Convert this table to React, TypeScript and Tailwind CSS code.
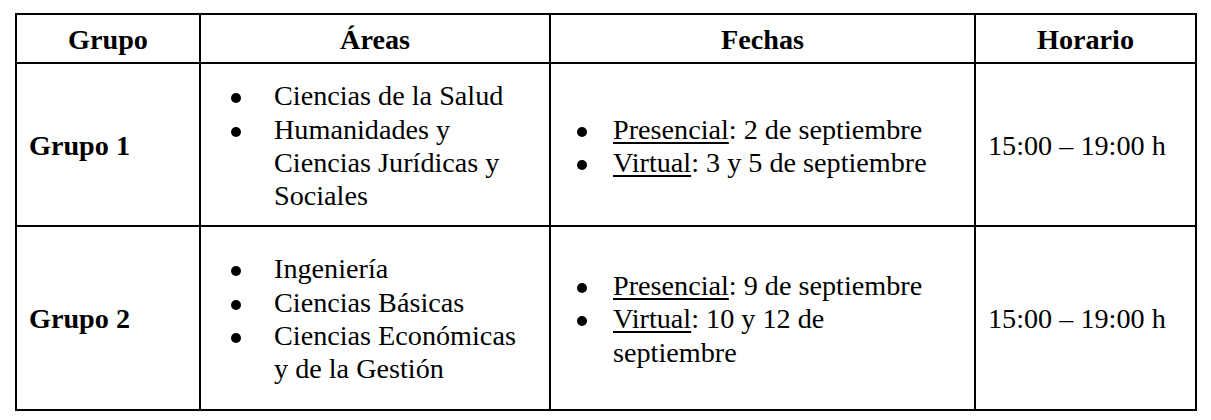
import React from "react";

const AreaItem = ({ children }: { children: React.ReactNode }) => (
  <div className="flex">
    <span className="flex w-[73px] shrink-0 pl-[30px] pt-[14px]">
      <span className="block h-[10px] w-[10px] rounded-full bg-black" />
    </span>
    <span className="w-[250px]">{children}</span>
  </div>
);

const DateItem = ({ label, rest }: { label: string; rest: string }) => (
  <div className="flex">
    <span className="flex w-[62px] shrink-0 pl-[26px] pt-[14px]">
      <span className="block h-[10px] w-[10px] rounded-full bg-black" />
    </span>
    <span className="w-[325px]">
      <span className="underline decoration-2 underline-offset-[3px]">{label}</span>
      {rest}
    </span>
  </div>
);

export default function App() {
  return (
    <div className="h-[420px] w-[1211px] bg-white pl-[15px] pt-[13px] font-['Liberation_Serif',serif] text-[28.2px] leading-[33.3px] text-black">
      <div className="grid w-[1182px] grid-cols-[182px_350px_425px_221px] grid-rows-[47px_163px_184px] border-2 border-black">
        {/* Header */}
        <div className="flex items-center justify-center pt-[3px] font-bold">Grupo</div>
        <div className="flex items-center justify-center border-l-2 border-black pt-[3px] font-bold">Áreas</div>
        <div className="flex items-center justify-center border-l-2 border-black pt-[3px] font-bold">Fechas</div>
        <div className="flex items-center justify-center border-l-2 border-black pt-[3px] font-bold">Horario</div>

        {/* Row 1 */}
        <div className="flex items-center border-t-2 border-black pl-[12px] pt-[3px] font-bold">Grupo 1</div>
        <div className="flex flex-col justify-center border-l-2 border-t-2 border-black pt-[3px]">
          <AreaItem>Ciencias de la Salud</AreaItem>
          <AreaItem>Humanidades y Ciencias Jurídicas y Sociales</AreaItem>
        </div>
        <div className="flex flex-col justify-center border-l-2 border-t-2 border-black pt-[3px]">
          <DateItem label="Presencial" rest=": 2 de septiembre" />
          <DateItem label="Virtual" rest=": 3 y 5 de septiembre" />
        </div>
        <div className="flex items-center border-l-2 border-t-2 border-black pl-[12px] pt-[3px]">15:00 – 19:00 h</div>

        {/* Row 2 */}
        <div className="flex items-center border-t-2 border-black pl-[12px] pt-[2px] font-bold">Grupo 2</div>
        <div className="flex flex-col justify-center border-l-2 border-t-2 border-black pt-[2px]">
          <AreaItem>Ingeniería</AreaItem>
          <AreaItem>Ciencias Básicas</AreaItem>
          <AreaItem>Ciencias Económicas y de la Gestión</AreaItem>
        </div>
        <div className="flex flex-col justify-center border-l-2 border-t-2 border-black pt-[2px]">
          <DateItem label="Presencial" rest=": 9 de septiembre" />
          <DateItem label="Virtual" rest=": 10 y 12 de septiembre" />
        </div>
        <div className="flex items-center border-l-2 border-t-2 border-black pl-[12px] pt-[2px]">15:00 – 19:00 h</div>
      </div>
    </div>
  );
}
